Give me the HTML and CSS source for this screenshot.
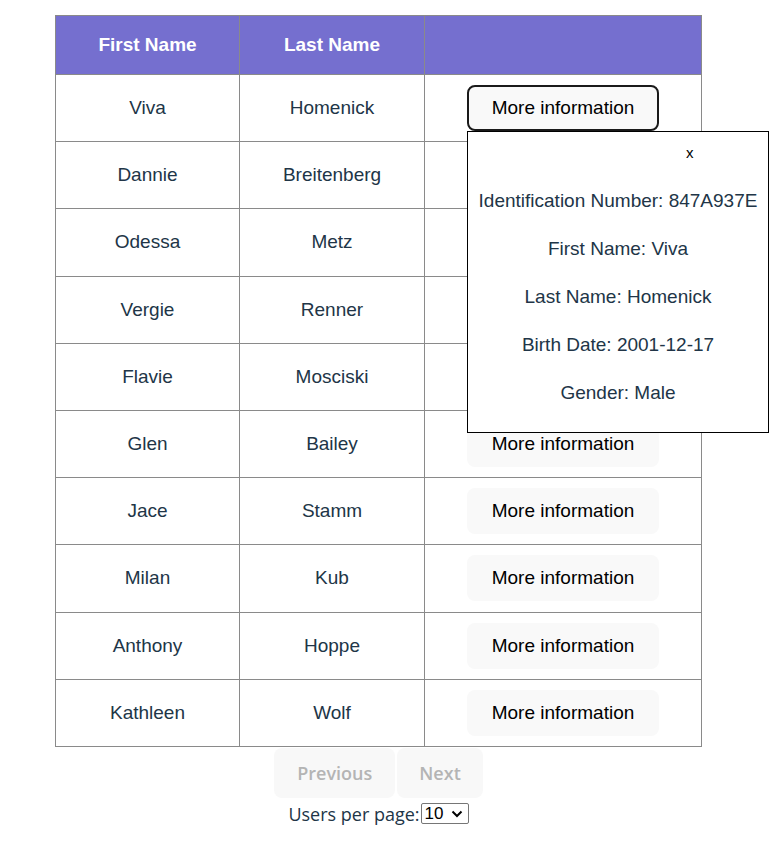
FILE: index.html
```html
<!DOCTYPE html>
<html>
<head>
<meta charset="utf-8">
<link rel="stylesheet" href="styles.css">
</head>
<body>
<div class="app">
  <table class="users">
    <thead>
      <tr><th>First Name</th><th>Last Name</th><th></th></tr>
    </thead>
    <tbody>
      <tr><td>Viva</td><td>Homenick</td><td class="action">
        <div class="anchor">
          <button class="more focused">More information</button>
          <div class="popup">
            <div class="close">x</div>
            <p>Identification Number: 847A937E</p>
            <p>First Name: Viva</p>
            <p>Last Name: Homenick</p>
            <p>Birth Date: 2001-12-17</p>
            <p>Gender: Male</p>
          </div>
        </div>
      </td></tr>
      <tr><td>Dannie</td><td>Breitenberg</td><td class="action"><button class="more">More information</button></td></tr>
      <tr><td>Odessa</td><td>Metz</td><td class="action"><button class="more">More information</button></td></tr>
      <tr><td>Vergie</td><td>Renner</td><td class="action"><button class="more">More information</button></td></tr>
      <tr><td>Flavie</td><td>Mosciski</td><td class="action"><button class="more">More information</button></td></tr>
      <tr><td>Glen</td><td>Bailey</td><td class="action"><button class="more">More information</button></td></tr>
      <tr><td>Jace</td><td>Stamm</td><td class="action"><button class="more">More information</button></td></tr>
      <tr><td>Milan</td><td>Kub</td><td class="action"><button class="more">More information</button></td></tr>
      <tr><td>Anthony</td><td>Hoppe</td><td class="action"><button class="more">More information</button></td></tr>
      <tr><td>Kathleen</td><td>Wolf</td><td class="action"><button class="more">More information</button></td></tr>
    </tbody>
  </table>
  <div class="pager">
    <button class="page-btn" disabled>Previous</button><button class="page-btn" disabled>Next</button>
  </div>
  <div class="per-page">Users per page:<span class="sel-wrap"><select class="sel"><option>10</option></select><svg class="chev" width="12" height="8" viewBox="0 0 12 8"><path d="M1.5 1.5 L6 6 L10.5 1.5" fill="none" stroke="#000" stroke-width="2"/></svg></span></div>
</div>
</body>
</html>
```

FILE: styles.css
```css
html, body {
  margin: 0;
  padding: 0;
  background: #ffffff;
}
body {
  font-family: "Liberation Sans", Arial, sans-serif;
  color: #213547;
}
.app {
  width: 647px;
  margin-left: 55px;
  padding-top: 15px;
  display: flex;
  flex-direction: column;
  align-items: center;
}
.users {
  width: 647px;
  border-collapse: collapse;
  font-size: 19px;
  table-layout: fixed;
}
.users th, .users td {
  border: 1px solid #8a8a8a;
  text-align: center;
  padding: 0;
}
.users th {
  background: #756fcf;
  color: #ffffff;
  font-weight: bold;
  height: 58px;
}
.users th:nth-child(1), .users td:nth-child(1) { width: 183px; }
.users th:nth-child(2), .users td:nth-child(2) { width: 184px; }
.users td {
  height: 66.2px;
}
.anchor {
  position: relative;
  display: inline-block;
}
.more {
  font-family: "Liberation Sans", Arial, sans-serif;
  font-size: 19px;
  color: #000;
  background: #f9f9f9;
  border: 2px solid transparent;
  border-radius: 8px;
  width: 192px;
  height: 46px;
  padding: 0;
  cursor: pointer;
}
.more.focused {
  border-color: #1a1a1a;
}
.popup {
  position: absolute;
  left: 0;
  top: 46px;
  width: 302px;
  height: 302px;
  box-sizing: border-box;
  background: #fff;
  border: 1px solid #000;
  z-index: 5;
  display: flex;
  flex-direction: column;
  align-items: center;
  padding-top: 12px;
}
.close {
  color: #000;
  font-size: 15px;
  align-self: flex-start;
  margin-left: 218px;
  line-height: 18px;
  margin-bottom: 28px;
}
.popup p {
  margin: 0 0 26px 0;
  line-height: 22px;
  font-size: 19px;
  white-space: nowrap;
}
.pager {
  display: flex;
  gap: 2px;
  margin-top: 1px;
}
.page-btn {
  font-family: "Open Sans", sans-serif;
  font-weight: 600;
  font-size: 18px;
  color: #b4b4b4;
  background: #f8f8f8;
  border: none;
  border-radius: 8px;
  height: 50px;
  padding: 0 23px;
}
.page-btn + .page-btn { padding: 0 22px; }
.per-page {
  font-family: "Open Sans", sans-serif;
  font-size: 18px;
  color: #213547;
  margin-top: 4px;
  display: flex;
  align-items: center;
}
.sel-wrap {
  position: relative;
  display: inline-flex;
  margin-left: 1px;
}
.sel {
  -webkit-appearance: none;
  appearance: none;
  font-family: "Liberation Sans", Arial, sans-serif;
  font-size: 17px;
  color: #000;
  background: #fff;
  border: 1px solid #767676;
  border-radius: 2px;
  height: 21px;
  width: 48px;
  padding: 0 0 0 3px;
  line-height: 19px;
}
.chev {
  position: absolute;
  right: 6px;
  top: 7px;
  pointer-events: none;
}
```
